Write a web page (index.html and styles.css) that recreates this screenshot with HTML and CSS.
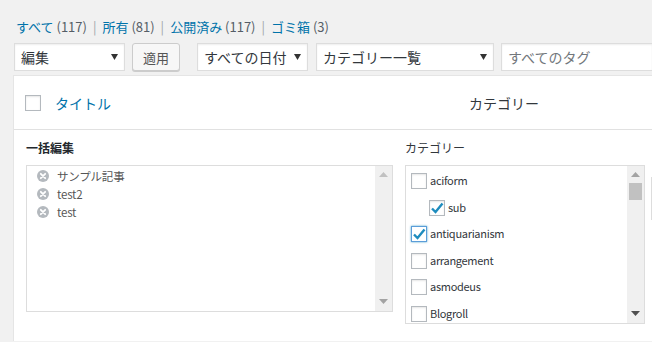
FILE: index.html
```html
<!DOCTYPE html>
<html lang="ja">
<head>
<meta charset="utf-8">
<link rel="stylesheet" href="styles.css">
</head>
<body>
<div class="page">
  <ul class="subsubsub">
    <li><a class="cur">すべて</a> <span class="count">(117)</span></li>
    <li class="sep">|</li>
    <li><a>所有</a> <span class="count">(81)</span></li>
    <li class="sep">|</li>
    <li><a>公開済み</a> <span class="count">(117)</span></li>
    <li class="sep">|</li>
    <li><a>ゴミ箱</a> <span class="count">(3)</span></li>
  </ul>

  <div class="tablenav">
    <div class="select w-bulk"><span>編集</span><svg class="arr" width="7" height="6" viewBox="0 0 7 6"><path d="M0 0H7L3.5 6Z" fill="#333"/></svg></div>
    <div class="button">適用</div>
    <div class="select w-date"><span>すべての日付</span><svg class="arr" width="7" height="6" viewBox="0 0 7 6"><path d="M0 0H7L3.5 6Z" fill="#333"/></svg></div>
    <div class="select w-cat"><span>カテゴリー一覧</span><svg class="arr" width="7" height="6" viewBox="0 0 7 6"><path d="M0 0H7L3.5 6Z" fill="#333"/></svg></div>
    <div class="select w-tag placeholder"><span>すべてのタグ</span></div>
  </div>

  <div class="table">
    <div class="thead">
      <span class="cb"></span>
      <a class="col-title">タイトル</a>
      <span class="col-cat">カテゴリー</span>
    </div>
    <div class="bulk">
      <div class="col-left">
        <div class="label bold">一括編集</div>
        <div class="box box-left">
          <ul class="titles">
            <li><svg class="x" width="12" height="12" viewBox="0 0 12 12"><circle cx="6" cy="6" r="6" fill="#b4b9be"/><path d="M3.8 3.8L8.2 8.2M8.2 3.8L3.8 8.2" stroke="#fff" stroke-width="1.8" stroke-linecap="round"/></svg>サンプル記事</li>
            <li><svg class="x" width="12" height="12" viewBox="0 0 12 12"><circle cx="6" cy="6" r="6" fill="#b4b9be"/><path d="M3.8 3.8L8.2 8.2M8.2 3.8L3.8 8.2" stroke="#fff" stroke-width="1.8" stroke-linecap="round"/></svg>test2</li>
            <li><svg class="x" width="12" height="12" viewBox="0 0 12 12"><circle cx="6" cy="6" r="6" fill="#b4b9be"/><path d="M3.8 3.8L8.2 8.2M8.2 3.8L3.8 8.2" stroke="#fff" stroke-width="1.8" stroke-linecap="round"/></svg>test</li>
          </ul>
          <div class="sbar">
            <svg width="9" height="5" viewBox="0 0 9 5"><path d="M0 5H9L4.5 0Z" fill="#c1c1c1"/></svg>
            <span class="fill"></span>
            <svg width="9" height="5" viewBox="0 0 9 5"><path d="M0 0H9L4.5 5Z" fill="#a3a3a3"/></svg>
          </div>
        </div>
      </div>
      <div class="col-right">
        <div class="label">カテゴリー</div>
        <div class="box box-right">
          <ul class="cats">
            <li><span class="cb"></span>aciform</li>
            <li class="child"><span class="cb checked"><svg width="14" height="12" viewBox="0 0 14 12"><path d="M2 6.5L5.5 10L12.5 1.5" fill="none" stroke="#1e8cbe" stroke-width="2.4"/></svg></span>sub</li>
            <li><span class="cb checked focus"><svg width="14" height="12" viewBox="0 0 14 12"><path d="M2 6.5L5.5 10L12.5 1.5" fill="none" stroke="#1e8cbe" stroke-width="2.4"/></svg></span>antiquarianism</li>
            <li><span class="cb"></span>arrangement</li>
            <li><span class="cb"></span>asmodeus</li>
            <li><span class="cb"></span>Blogroll</li>
          </ul>
          <div class="sbar">
            <svg width="9" height="5" viewBox="0 0 9 5"><path d="M0 5H9L4.5 0Z" fill="#a3a3a3"/></svg>
            <span class="thumb"></span>
            <span class="fill"></span>
            <svg width="9" height="5" viewBox="0 0 9 5"><path d="M0 0H9L4.5 5Z" fill="#505050"/></svg>
          </div>
        </div>
      </div>
      <div class="col-next"></div>
    </div>
  </div>
</div>
</body>
</html>
```

FILE: styles.css
```css
html, body {
  margin: 0;
  padding: 0;
  background: #f1f1f1;
  overflow: hidden;
  width: 652px;
  height: 342px;
}
body {
  font-family: "Noto Sans CJK JP", "Noto Sans", sans-serif;
  color: #32373c;
  font-size: 13px;
}
ul { list-style: none; margin: 0; padding: 0; }
a { color: #0073aa; text-decoration: none; }

.subsubsub {
  display: flex;
  gap: 6px;
  padding: 19px 0 0 16px;
  line-height: 16px;
  font-size: 13px;
  white-space: nowrap;
}
.subsubsub .count { color: #555d66; }
.subsubsub .sep { color: #a0a5aa; }

.tablenav {
  display: flex;
  margin-top: 8px;
  padding-left: 14px;
  height: 28px;
  white-space: nowrap;
}
.select {
  box-sizing: border-box;
  height: 28px;
  background: #fff;
  border: 1px solid #ddd;
  box-shadow: inset 0 1px 2px rgba(0,0,0,.07);
  display: flex;
  align-items: center;
  justify-content: space-between;
  padding: 0 6px 0 6px;
  font-size: 14px;
  color: #32373c;
  flex: none;
}
.w-bulk { width: 111px; }
.w-date { width: 111px; margin-left: 17px; }
.w-cat { width: 178px; margin-left: 8px; }
.w-tag { width: 151px; margin-left: 7px; border-right: 0; }
.placeholder { color: #72777c; }
.button {
  box-sizing: border-box;
  flex: none;
  margin-left: 7px;
  width: 48px;
  height: 28px;
  background: #f7f7f7;
  border: 1px solid #ccc;
  border-radius: 3px;
  box-shadow: 0 1px 0 #ccc;
  color: #555;
  font-size: 13px;
  display: flex;
  align-items: center;
  justify-content: center;
}

.table {
  margin: 4px 0 0 13px;
  background: #fff;
  border: 1px solid #e5e5e5;
  border-right: 0;
  border-bottom: 0;
  height: 266px;
  box-sizing: border-box;
  overflow: hidden;
}
.thead {
  height: 53px;
  border-bottom: 1px solid #e1e1e1;
  display: flex;
  align-items: center;
  padding-left: 11px;
}
.cb {
  box-sizing: border-box;
  width: 16px;
  height: 16px;
  border: 1px solid #b4b9be;
  background: #fff;
  box-shadow: inset 0 1px 2px rgba(0,0,0,.1);
  display: inline-flex;
  align-items: center;
  justify-content: center;
  flex: none;
}
.cb.focus { border-color: #5b9dd9; box-shadow: 0 0 2px rgba(30,140,190,.8); }
.col-title { margin-left: 14px; font-size: 14px; width: 414px; flex: none; }
.col-cat { font-size: 14px; color: #32373c; }

.bulk {
  display: flex;
  padding: 9px 0 0 12px;
}
.label {
  font-size: 12px;
  line-height: 17px;
  margin-bottom: 9px;
  color: #32373c;
}
.label.bold { font-weight: 600; color: #23282d; }
.col-left { width: 367px; flex: none; }
.col-right { width: 240px; margin-left: 12px; flex: none; }
.col-next {
  margin: 38px 0 0 6px;
  width: 1px;
  height: 43px;
  background: #ddd;
  flex: none;
}
.box {
  box-sizing: border-box;
  border: 1px solid #ddd;
  display: flex;
  background: #fff;
  overflow: hidden;
}
.box-left { height: 147px; }
.box-right { height: 159px; }
.titles {
  flex: 1;
  padding: 1px 0 0 10px;
  font-size: 11.5px;
  letter-spacing: -0.2px;
  color: #555;
}
.titles li { display: flex; align-items: center; height: 18px; line-height: 18px; }
.titles .x { margin-right: 8px; }
.cats {
  flex: 1;
  padding: 7px 0 0 5px;
  font-size: 11px;
  letter-spacing: -0.3px;
  color: #32373c;
}
.cats li { display: flex; align-items: flex-start; height: 26.6px; line-height: 15px; }
.cats li .cb { margin-right: 3px; }
.cats li.child { padding-left: 18px; }
.sbar {
  width: 17px;
  background: #f0f0f0;
  display: flex;
  flex-direction: column;
  align-items: center;
  padding: 6px 0 7px;
  box-sizing: border-box;
  flex: none;
}
.sbar .fill { flex: 1; }
.sbar .thumb {
  width: 13px;
  height: 17px;
  background: #c1c1c1;
  margin-top: 6px;
}
```
